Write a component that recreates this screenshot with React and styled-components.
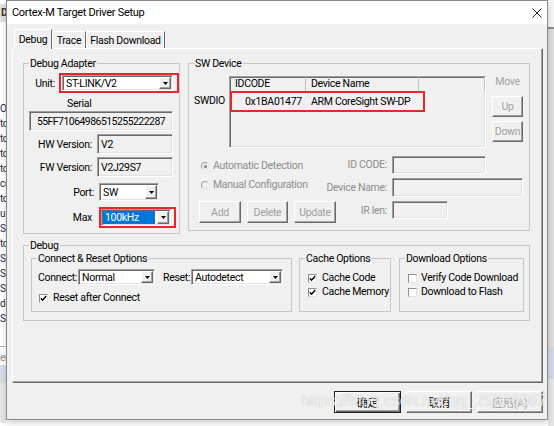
import React from 'react'
import styled, { createGlobalStyle, css } from 'styled-components'

const GlobalStyle = createGlobalStyle`
  html, body {
    margin: 0;
    padding: 0;
    background: #fff;
  }
  body {
    font-family: Roboto, "Noto Sans CJK SC", sans-serif;
    font-size: 10.5px;
    letter-spacing: -0.3px;
    color: #111;
  }
`

// classic win32 bevels
const sunken = css`
  border: 1px solid;
  border-color: #a0a0a0 #fff #fff #a0a0a0;
  box-shadow: inset 1px 1px 0 #696969, inset -1px -1px 0 #e3e3e3;
`
const raised = css`
  border: 1px solid;
  border-color: #fff #696969 #696969 #fff;
  box-shadow: inset -1px -1px 0 #a0a0a0;
`

const Screen = styled.div`
  display: flex;
  align-items: flex-start;
  width: 554px;
  height: 426px;
  overflow: hidden;
  background: #fff;
`

const Backdrop = styled.div`
  width: 6px;
  height: 426px;
  flex: none;
  overflow: hidden;
  display: flex;
  flex-direction: column;
  background: #fff;
`
const BackdropBar = styled.div`
  height: 18px;
  margin-top: 4px;
  background: #e2e2e2;
  color: #333;
  font-size: 10px;
  font-weight: bold;
  line-height: 18px;
  padding-left: 1px;
`
const BackdropText = styled.div`
  margin-top: 79px;
  font-size: 10px;
  line-height: 15px;
  color: #1d2b4a;
  white-space: nowrap;
`
const BackdropRule = styled.div`
  height: 1px;
  margin-top: 20px;
  background: #b4b4b4;
`
const BackdropHint = styled.div`
  font-size: 10px;
  line-height: 14px;
  color: #8a8a8a;
  margin-top: 4px;
`
const BackdropBand = styled.div`
  height: ${p => p.h}px;
  background: ${p => p.c};
  flex: none;
`

const Dialog = styled.div`
  position: relative;
  width: 542px;
  height: 420px;
  flex: none;
  box-sizing: border-box;
  border: 1px solid #8a8a8a;
  background: #f0f0f0;
  display: flex;
  flex-direction: column;
  box-shadow: 0 3px 6px rgba(0, 0, 0, 0.18);
`
const TitleBar = styled.div`
  height: 23px;
  flex: none;
  background: #fff;
  display: flex;
  align-items: center;
  justify-content: space-between;
  padding: 0 5px;
  font-size: 11px;
  color: #000;
`
const DialogBody = styled.div`
  flex: 1;
  display: flex;
  flex-direction: column;
  padding: 5px 4px 0 5px;
`

const TabStrip = styled.div`
  display: flex;
  align-items: flex-end;
  height: 19px;
  padding-left: 2px;
`
const Tab = styled.div`
  width: ${p => p.w}px;
  height: ${p => (p.active ? 20 : 17)}px;
  box-sizing: border-box;
  border-top: 1px solid #fff;
  border-left: 1px solid #fff;
  border-right: 1px solid #696969;
  background: #f0f0f0;
  display: flex;
  align-items: center;
  justify-content: center;
  color: #000;
  ${p =>
    p.active &&
    css`
      margin-bottom: -1px;
      position: relative;
      z-index: 1;
    `}
`
const TabPanel = styled.div`
  height: 335px;
  flex: none;
  box-sizing: border-box;
  ${raised}
  padding: 8px 0 0 10px;
`

const TopRow = styled.div`
  display: flex;
  align-items: flex-start;
  gap: 8px;
`
const Group = styled.fieldset`
  width: ${p => p.w}px;
  height: ${p => p.h}px;
  box-sizing: border-box;
  margin: ${p => p.mt || 0}px 0 0 ${p => p.ml || 0}px;
  padding: 0;
  min-width: 0;
  border: 1px solid #c6c6c6;
  flex: none;
`
const GroupTitle = styled.legend`
  margin-left: 5px;
  padding: 0 1px;
  line-height: 13px;
  color: #000;
`

const Column = styled.div`
  display: flex;
  flex-direction: column;
`
const FieldRow = styled.div`
  display: flex;
  align-items: center;
  margin-top: ${p => p.mt || 0}px;
`
const FieldLabel = styled.span`
  width: ${p => p.w}px;
  margin-left: ${p => p.ml || 0}px;
  margin-right: ${p => p.mr || 0}px;
  text-align: ${p => p.align || 'right'};
  flex: none;
  white-space: nowrap;
  color: #000;
`
const Highlight = styled.div`
  border: 2px solid #e8262c;
  margin-left: ${p => p.ml || 0}px;
  padding: 0 ${p => p.pr || 0}px 0 0;
  display: flex;
`
const ComboBox = styled.div`
  width: ${p => p.w}px;
  height: ${p => p.h}px;
  box-sizing: border-box;
  margin-left: ${p => p.ml || 0}px;
  ${sunken}
  background: #fff;
  display: flex;
  padding: 1px;
  flex: none;
`
const ComboText = styled.span`
  flex: 1;
  display: flex;
  align-items: center;
  padding-left: 2px;
  margin-right: 1px;
  color: #000;
  white-space: nowrap;
  overflow: hidden;
  ${p =>
    p.selected &&
    css`
      background: #0078d7;
      color: #fff;
      margin-right: 2px;
    `}
`
const ComboArrow = styled.span`
  width: 12px;
  flex: none;
  box-sizing: border-box;
  ${raised}
  background: #f0f0f0;
  display: flex;
  align-items: center;
  justify-content: center;
`
const ReadonlyField = styled.div`
  width: ${p => p.w}px;
  height: ${p => p.h || 20}px;
  box-sizing: border-box;
  margin-left: ${p => p.ml || 0}px;
  ${sunken}
  background: #f0f0f0;
  display: flex;
  align-items: center;
  justify-content: ${p => (p.center ? 'center' : 'flex-start')};
  padding-left: ${p => (p.center ? 0 : 3)}px;
  letter-spacing: ${p => (p.tight ? '-0.55px' : 'inherit')};
  color: #000;
  flex: none;
`
const SerialCaption = styled.div`
  margin: 5px 0 0 43px;
  line-height: 12px;
  color: #000;
`

const DeviceTop = styled.div`
  display: flex;
  align-items: flex-start;
  margin-top: 6px;
`
const PortName = styled.div`
  width: 35px;
  padding-left: 5px;
  margin-top: 19px;
  line-height: 12px;
  color: #000;
`
const DeviceTable = styled.div`
  width: 257px;
  height: 72px;
  box-sizing: border-box;
  ${sunken}
  background: #f0f0f0;
  flex: none;
`
const TableHead = styled.div`
  display: flex;
  height: 14px;
`
const HeadCell = styled.div`
  width: ${p => (p.w ? `${p.w}px` : 'auto')};
  flex: ${p => (p.w ? 'none' : 1)};
  box-sizing: border-box;
  border-right: 1px solid #c0c0c0;
  padding-left: 5px;
  line-height: 14px;
  color: #000;
`
const DataRow = styled.div`
  width: 195px;
  height: 21px;
  box-sizing: border-box;
  border: 2px solid #e8262c;
  display: flex;
  align-items: center;
`
const DataCell = styled.span`
  width: ${p => (p.w ? `${p.w}px` : 'auto')};
  padding-left: ${p => p.pl}px;
  box-sizing: border-box;
  flex: none;
  color: #000;
  white-space: nowrap;
`
const MoveColumn = styled.div`
  display: flex;
  flex-direction: column;
  margin-left: 6px;
`
const MoveCaption = styled.div`
  line-height: 12px;
  text-align: center;
  color: #a3a3a3;
`
const PushButton = styled.div`
  width: ${p => p.w}px;
  height: ${p => p.h || 22}px;
  margin-top: ${p => p.mt || 0}px;
  box-sizing: border-box;
  flex: none;
  ${raised}
  background: #f0f0f0;
  display: flex;
  align-items: center;
  justify-content: center;
  color: ${p => (p.disabled ? '#a0a0a0' : '#000')};
  ${p =>
    p.primary &&
    css`
      border: 1px solid #1e1e1e;
      box-shadow: inset 1px 1px 0 #fff, inset -1px -1px 0 #696969, inset -2px -2px 0 #a0a0a0;
    `}
`

const ConfigRow = styled.div`
  display: flex;
  align-items: flex-start;
  height: ${p => p.h}px;
  margin: ${p => p.mt}px 6px 0 10px;
`
const RadioOption = styled.div`
  display: flex;
  align-items: center;
  gap: 4px;
  margin: ${p => p.mt}px 0 0 2px;
  line-height: 12px;
  color: #8d8d8d;
  white-space: nowrap;
`
const RadioDot = styled.span`
  width: 8px;
  height: 8px;
  box-sizing: border-box;
  border-radius: 50%;
  border: 1px solid #a0a0a0;
  border-right-color: #e3e3e3;
  border-bottom-color: #e3e3e3;
  background: #f0f0f0;
  display: flex;
  align-items: center;
  justify-content: center;
  &::after {
    content: '';
    width: 3px;
    height: 3px;
    border-radius: 50%;
    background: ${p => (p.checked ? '#7d7d7d' : 'transparent')};
  }
`
const ConfigLabel = styled.span`
  flex: 1;
  text-align: right;
  margin-right: 5px;
  line-height: ${p => p.lh}px;
  color: #8d8d8d;
  white-space: nowrap;
`
const FieldSlot = styled.div`
  width: 131px;
  flex: none;
`
const EmptyField = styled.div`
  width: ${p => p.w}px;
  height: ${p => p.h}px;
  box-sizing: border-box;
  ${sunken}
  background: #f0f0f0;
`
const ButtonGroup = styled.div`
  display: flex;
  gap: 6px;
`

const OptionsRow = styled.div`
  display: flex;
  align-items: flex-start;
  padding-left: 7px;
`
const CheckOption = styled.div`
  display: flex;
  align-items: center;
  gap: ${p => p.gap || 5}px;
  padding-left: ${p => p.pl}px;
  margin-top: ${p => p.mt || 0}px;
  line-height: 14px;
  color: #000;
  white-space: nowrap;
  overflow: hidden;
`
const CheckBox = styled.span`
  width: 9px;
  height: 9px;
  box-sizing: border-box;
  flex: none;
  border: 1px solid;
  border-color: #8e8e8e #e3e3e3 #e3e3e3 #8e8e8e;
  background: #fff;
  display: flex;
  align-items: center;
  justify-content: center;
`

const ButtonBar = styled.div`
  display: flex;
  justify-content: flex-end;
  gap: 5px;
  margin-top: 8px;
  font-size: 11px;
`
const Watermark = styled.div`
  position: absolute;
  left: 294px;
  top: 390px;
  font-family: "Liberation Sans", Arial, sans-serif;
  font-size: 16px;
  line-height: 20px;
  letter-spacing: 0;
  color: rgba(255, 255, 255, 0.82);
  text-shadow: 0 0 1px rgba(90, 90, 90, 0.45);
  pointer-events: none;
  white-space: nowrap;
`

const RightEdge = styled.div`
  width: 6px;
  height: 426px;
  flex: none;
  display: flex;
  flex-direction: column;
  background: #dcdcdc;
`

const Triangle = () => (
  <svg width="5" height="3" viewBox="0 0 5 3">
    <path d="M0 0h5L2.5 3z" fill="#000" />
  </svg>
)

const Tick = () => (
  <svg width="7" height="7" viewBox="0 0 7 7">
    <path d="M0.8 3.3l1.8 1.9 3.6-4.2" fill="none" stroke="#000" strokeWidth="1.4" />
  </svg>
)

const CloseIcon = () => (
  <svg width="10" height="10" viewBox="0 0 10 10">
    <path d="M0.5 0.5l9 9M9.5 0.5l-9 9" stroke="#222" strokeWidth="1" />
  </svg>
)

const Combo = ({ w, h, ml, value, selected }) => (
  <ComboBox w={w} h={h} ml={ml}>
    <ComboText selected={selected}>{value}</ComboText>
    <ComboArrow>
      <Triangle />
    </ComboArrow>
  </ComboBox>
)

const Check = ({ pl, mt, gap, checked, children }) => (
  <CheckOption pl={pl} mt={mt} gap={gap}>
    <CheckBox>{checked && <Tick />}</CheckBox>
    {children}
  </CheckOption>
)

const backdropLines = ['Or', 'to', 'to', 'to', 'to', 'cd', 'to', 'u.', 'St', 'to', 'S', 'S', 'St', 'd', 'S']

export default function App() {
  return (
    <Screen>
      <GlobalStyle />
      <Backdrop>
        <BackdropBar>D</BackdropBar>
        <BackdropText>
          {backdropLines.map((line, i) => (
            <div key={i}>{line}</div>
          ))}
        </BackdropText>
        <BackdropRule />
        <BackdropHint>en</BackdropHint>
        <BackdropBand h={18} c="#d3deea" />
        <BackdropBand h={40} c="#e6e6e6" />
      </Backdrop>

      <Dialog>
        <TitleBar>
          <span>Cortex-M Target Driver Setup</span>
          <CloseIcon />
        </TitleBar>
        <DialogBody>
          <TabStrip>
            <Tab w={38} active>
              Debug
            </Tab>
            <Tab w={34}>Trace</Tab>
            <Tab w={79}>Flash Download</Tab>
          </TabStrip>
          <TabPanel>
            <TopRow>
              <Group w={157} h={177}>
                <GroupTitle>Debug Adapter</GroupTitle>
                <Column>
                  <FieldRow mt={3}>
                    <FieldLabel w={31}>Unit:</FieldLabel>
                    <Highlight ml={4} pr={4}>
                      <Combo w={111} h={16} ml={1} value="ST-LINK/V2" />
                    </Highlight>
                  </FieldRow>
                  <SerialCaption>Serial</SerialCaption>
                  <FieldRow mt={1}>
                    <ReadonlyField w={144} ml={5} center tight>
                      55FF71064986515255222287
                    </ReadonlyField>
                  </FieldRow>
                  <FieldRow mt={3}>
                    <FieldLabel w={68} mr={5}>
                      HW Version:
                    </FieldLabel>
                    <ReadonlyField w={76}>V2</ReadonlyField>
                  </FieldRow>
                  <FieldRow mt={3}>
                    <FieldLabel w={68} mr={5}>
                      FW Version:
                    </FieldLabel>
                    <ReadonlyField w={76}>V2J29S7</ReadonlyField>
                  </FieldRow>
                  <FieldRow mt={6}>
                    <FieldLabel w={70} mr={5}>
                      Port:
                    </FieldLabel>
                    <Combo w={60} h={18} value="SW" />
                  </FieldRow>
                  <FieldRow mt={6}>
                    <FieldLabel w={68} mr={7}>
                      Max
                    </FieldLabel>
                    <Highlight pr={3}>
                      <Combo w={70} h={17} value="100kHz" selected />
                    </Highlight>
                  </FieldRow>
                </Column>
              </Group>

              <Group w={342} h={174}>
                <GroupTitle>SW Device</GroupTitle>
                <Column>
                  <DeviceTop>
                    <PortName>SWDIO</PortName>
                    <DeviceTable>
                      <TableHead>
                        <HeadCell w={76}>IDCODE</HeadCell>
                        <HeadCell w={113}>Device Name</HeadCell>
                        <HeadCell />
                      </TableHead>
                      <DataRow>
                        <DataCell w={74} pl={13}>
                          0x1BA01477
                        </DataCell>
                        <DataCell pl={5}>ARM CoreSight SW-DP</DataCell>
                      </DataRow>
                    </DeviceTable>
                    <MoveColumn>
                      <MoveCaption>Move</MoveCaption>
                      <PushButton w={31} h={21} mt={8} disabled>
                        Up
                      </PushButton>
                      <PushButton w={31} h={21} mt={4} disabled>
                        Down
                      </PushButton>
                    </MoveColumn>
                  </DeviceTop>

                  <ConfigRow mt={8} h={18}>
                    <RadioOption mt={4}>
                      <RadioDot checked />
                      Automatic Detection
                    </RadioOption>
                    <ConfigLabel lh={18}>ID CODE:</ConfigLabel>
                    <FieldSlot>
                      <EmptyField w={94} h={18} />
                    </FieldSlot>
                  </ConfigRow>
                  <ConfigRow mt={4} h={19}>
                    <RadioOption mt={1}>
                      <RadioDot />
                      Manual Configuration
                    </RadioOption>
                    <ConfigLabel lh={19}>Device Name:</ConfigLabel>
                    <FieldSlot>
                      <EmptyField w={131} h={19} />
                    </FieldSlot>
                  </ConfigRow>
                  <ConfigRow mt={4} h={22}>
                    <ButtonGroup>
                      <PushButton w={42} disabled>
                        Add
                      </PushButton>
                      <PushButton w={41} disabled>
                        Delete
                      </PushButton>
                      <PushButton w={42} disabled>
                        Update
                      </PushButton>
                    </ButtonGroup>
                    <ConfigLabel lh={20}>IR len:</ConfigLabel>
                    <FieldSlot>
                      <EmptyField w={56} h={18} />
                    </FieldSlot>
                  </ConfigRow>
                </Column>
              </Group>
            </TopRow>

            <Group w={507} h={82} mt={5}>
              <GroupTitle>Debug</GroupTitle>
              <OptionsRow>
                <Group w={261} h={60}>
                  <GroupTitle>Connect &amp; Reset Options</GroupTitle>
                  <FieldRow mt={4}>
                    <FieldLabel w={38} ml={6} align="left">
                      Connect:
                    </FieldLabel>
                    <Combo w={77} h={16} ml={2} value="Normal" />
                    <FieldLabel w={26} ml={8} align="left">
                      Reset:
                    </FieldLabel>
                    <Combo w={92} h={16} ml={2} value="Autodetect" />
                  </FieldRow>
                  <Check pl={7} mt={6} checked>
                    Reset after Connect
                  </Check>
                </Group>
                <Group w={92} h={60} ml={7}>
                  <GroupTitle>Cache Options</GroupTitle>
                  <Check pl={8} mt={6} checked>
                    Cache Code
                  </Check>
                  <Check pl={8} checked>
                    Cache Memory
                  </Check>
                </Group>
                <Group w={125} h={60} ml={8}>
                  <GroupTitle>Download Options</GroupTitle>
                  <Check pl={8} mt={6} gap={4}>
                    Verify Code Download
                  </Check>
                  <Check pl={8} gap={4}>
                    Download to Flash
                  </Check>
                </Group>
              </OptionsRow>
            </Group>
          </TabPanel>

          <ButtonBar>
            <PushButton w={67} primary>
              确定
            </PushButton>
            <PushButton w={66}>取消</PushButton>
            <PushButton w={66} disabled>
              应用(A)
            </PushButton>
          </ButtonBar>
        </DialogBody>
        <Watermark>https://blog.csdn.net/qq_25836087</Watermark>
      </Dialog>

      <RightEdge>
        <BackdropBand h={27} c="#f4f4f4" />
        <BackdropBand h={2} c="#8c8c8c" />
        <BackdropBand h={318} c="#dcdcdc" />
        <BackdropBand h={32} c="#cfd9e4" />
        <BackdropBand h={47} c="#e4e4e4" />
      </RightEdge>
    </Screen>
  )
}
